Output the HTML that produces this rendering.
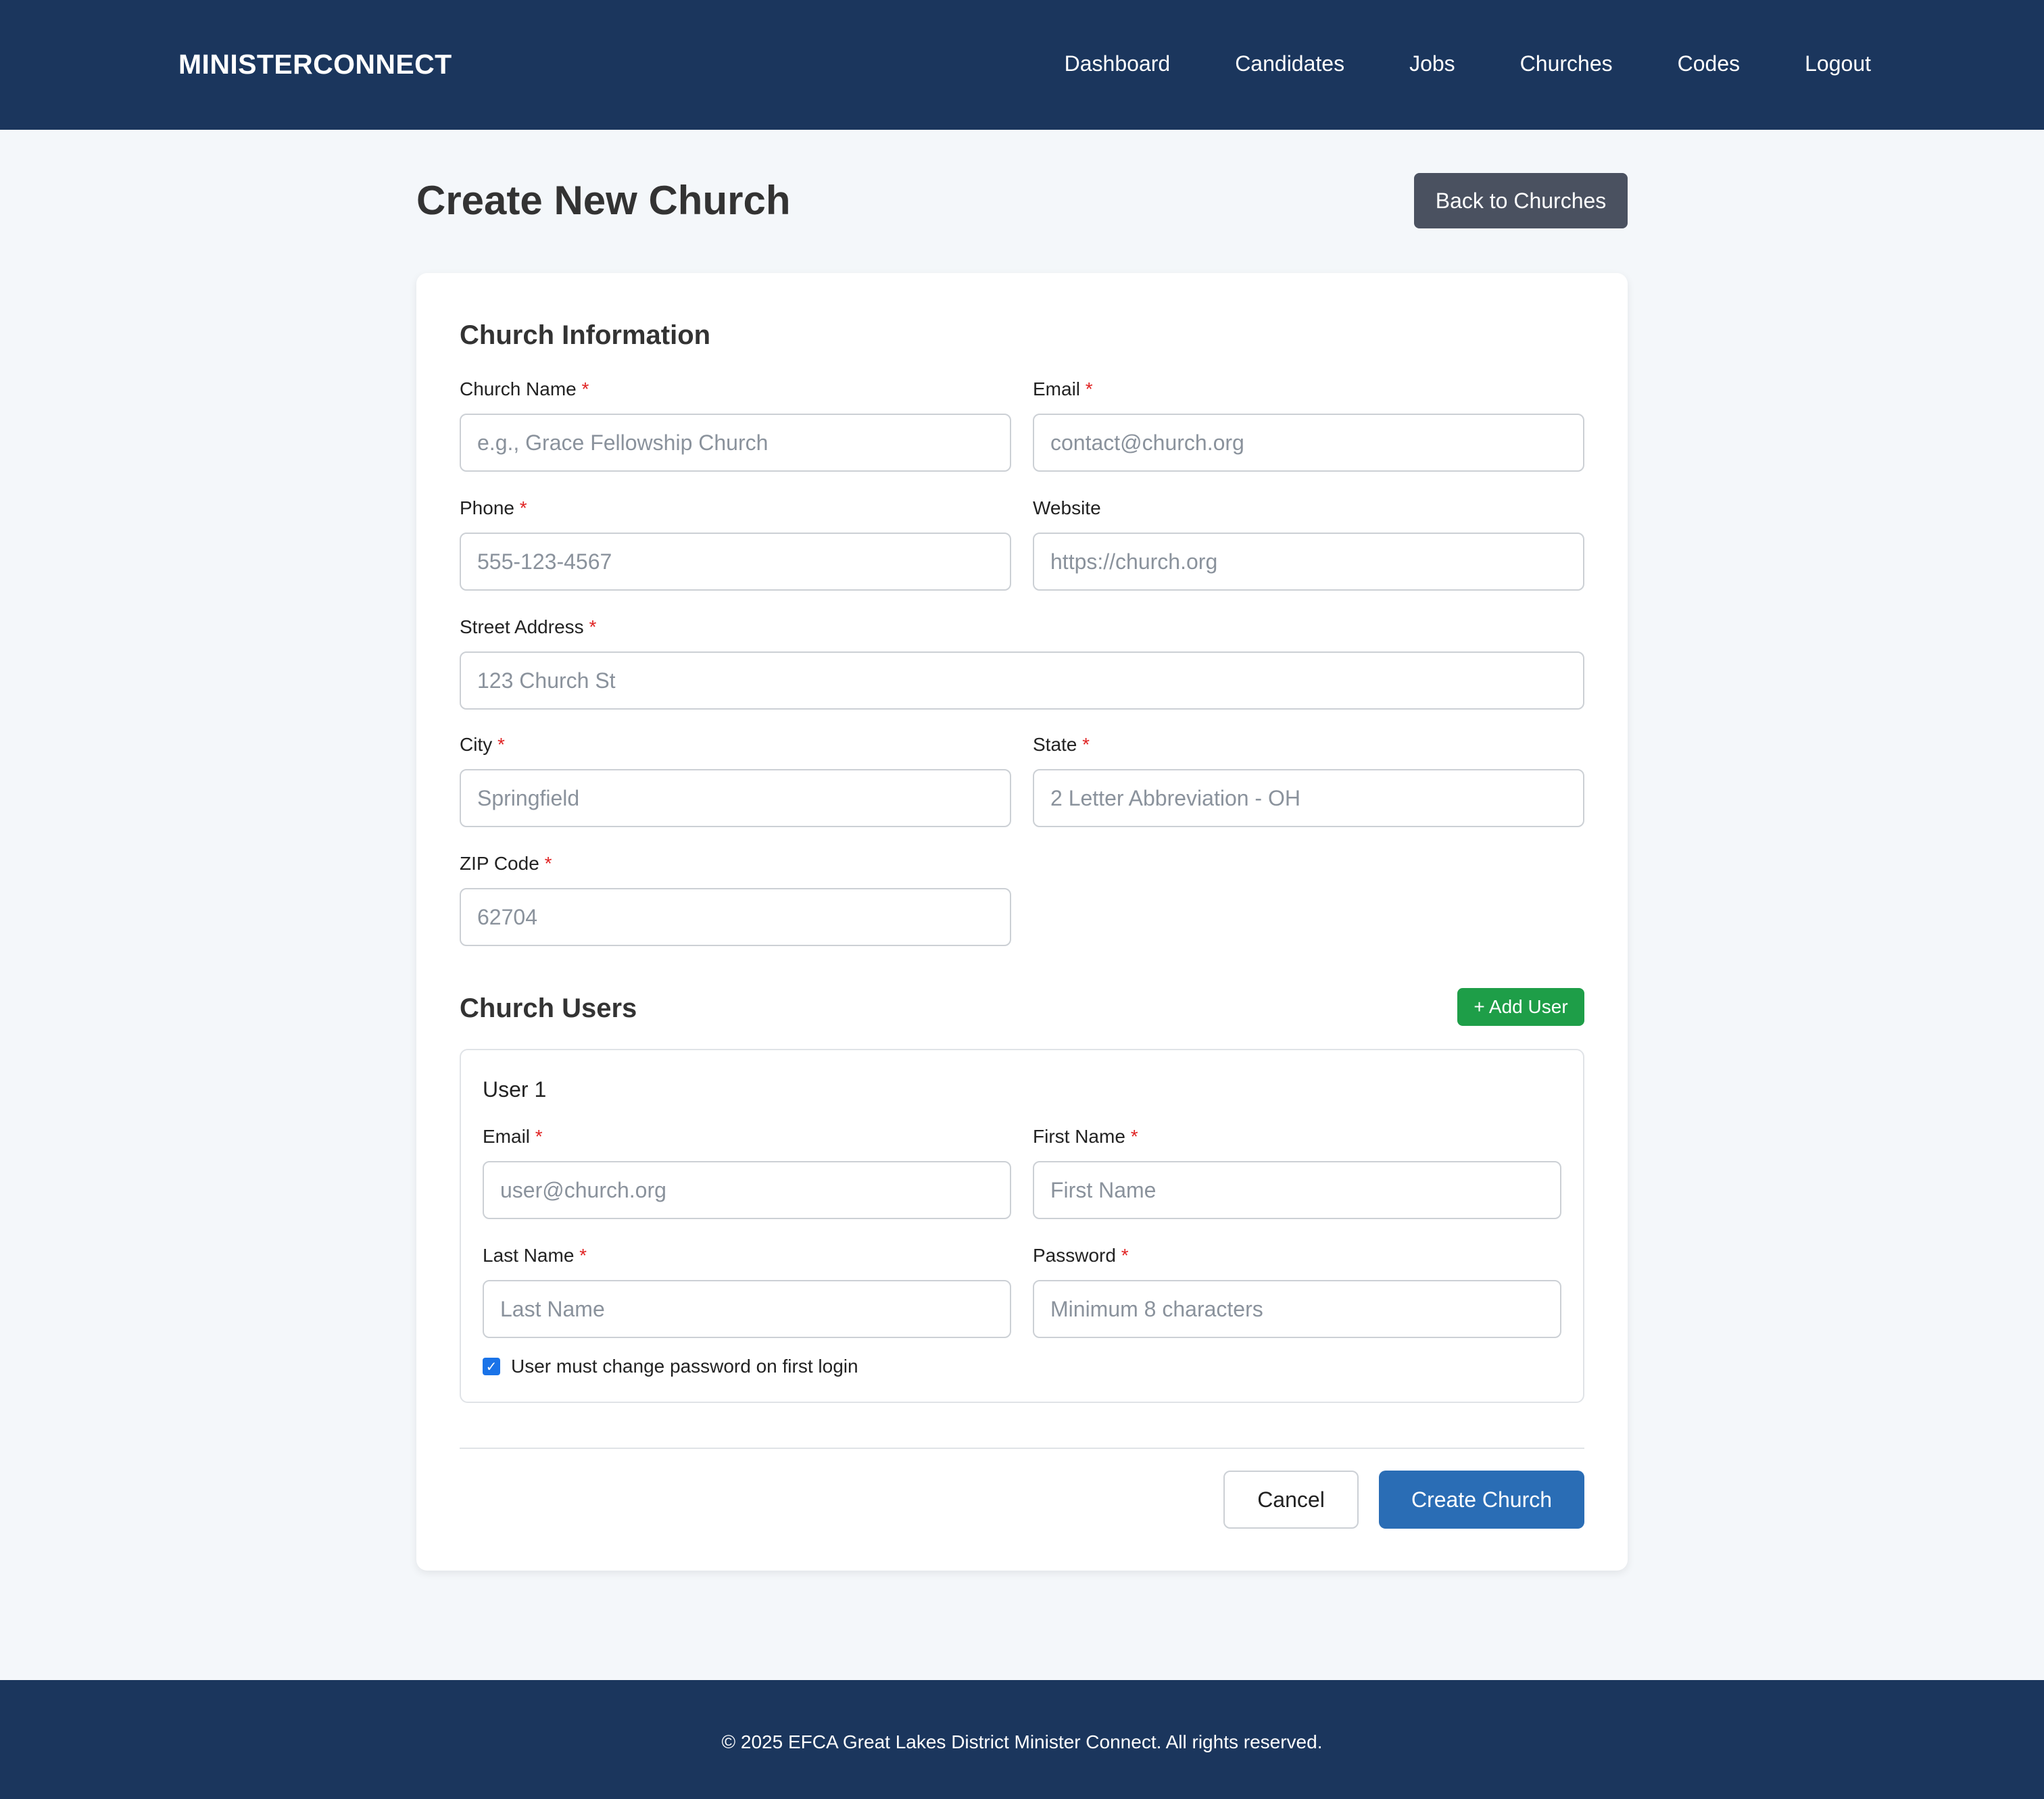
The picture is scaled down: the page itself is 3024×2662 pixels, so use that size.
<!DOCTYPE html>
<html><head><meta charset="utf-8">
<style>
*{box-sizing:border-box;margin:0;padding:0}
html,body{width:3024px;height:2662px;overflow:hidden}
body{background:#f4f7fa;font-family:"Liberation Sans",Arial,sans-serif;color:#333}
#root{zoom:2;width:1512px;height:1331px;position:relative}
header{height:96px;background:#1b365d;position:relative;color:#fff}
.logo{position:absolute;left:132px;top:36px;font-weight:bold;font-size:20.5px;letter-spacing:.2px}
nav{position:absolute;right:128px;top:38px;display:flex;gap:48px;font-size:16px}
.main{position:absolute;left:308px;width:896px;top:96px}
h1{position:absolute;top:35px;font-size:30px;font-weight:bold;color:#333}
.back{position:absolute;right:0;top:32px;height:41px;width:158px;background:#4a5160;color:#fff;border-radius:4px;font-size:16px;display:flex;align-items:center;justify-content:center}
.card{position:absolute;top:106px;left:0;width:896px;height:960px;background:#fff;border-radius:8px;box-shadow:0 2px 6px rgba(0,0,0,.08);padding:0 32px}
h2{position:absolute;font-size:20px;font-weight:bold;color:#333}
.f{position:absolute;width:408px}
.f label{display:block;font-size:14px;color:#222;height:19px}
.f label b{color:#e02424;font-weight:normal}
.f .in{margin-top:7px;height:43px;border:1px solid #ccd0d5;border-radius:5px;padding:0 12px;font-size:16px;color:#8a929c;display:flex;align-items:center}
.add{position:absolute;right:32px;top:529px;width:94px;height:28px;background:#1e9e48;color:#fff;font-size:14px;border-radius:4px;display:flex;align-items:center;justify-content:center}
.ubox{position:absolute;left:32px;top:574px;width:832px;height:262px;border:1px solid #e0e3e7;border-radius:6px}
.hr{position:absolute;left:32px;width:832px;top:869px;border-top:1px solid #e0e3e7}
.btn{position:absolute;top:886px;height:43px;border-radius:5px;font-size:16px;display:flex;align-items:center;justify-content:center}
footer{position:absolute;top:1243px;left:0;width:1512px;height:88px;background:#1b365d;color:#fff;font-size:14px;text-align:center;padding-top:38px}
</style></head><body><div id="root">
<header><div class="logo">MINISTERCONNECT</div>
<nav><span>Dashboard</span><span>Candidates</span><span>Jobs</span><span>Churches</span><span>Codes</span><span>Logout</span></nav></header>
<div class="main">
<h1>Create New Church</h1>
<div class="back">Back to Churches</div>
<div class="card">
<h2 style="left:32px;top:35px">Church Information</h2>
<div class="f" style="left:32px;top:78px"><label>Church Name <b>*</b></label><div class="in">e.g., Grace Fellowship Church</div></div>
<div class="f" style="left:456px;top:78px"><label>Email <b>*</b></label><div class="in">contact@church.org</div></div>
<div class="f" style="left:32px;top:166px"><label>Phone <b>*</b></label><div class="in">555-123-4567</div></div>
<div class="f" style="left:456px;top:166px"><label>Website</label><div class="in">https://church.org</div></div>
<div class="f" style="left:32px;top:254px;width:832px"><label>Street Address <b>*</b></label><div class="in">123 Church St</div></div>
<div class="f" style="left:32px;top:341px"><label>City <b>*</b></label><div class="in">Springfield</div></div>
<div class="f" style="left:456px;top:341px"><label>State <b>*</b></label><div class="in">2 Letter Abbreviation - OH</div></div>
<div class="f" style="left:32px;top:429px"><label>ZIP Code <b>*</b></label><div class="in">62704</div></div>
<h2 style="left:32px;top:533px">Church Users</h2>
<div class="add">+ Add User</div>
<div class="ubox">
<div style="position:absolute;left:16px;top:20px;font-size:16px;color:#222">User 1</div>
<div class="f" style="left:16px;top:56px;width:391px"><label>Email <b>*</b></label><div class="in">user@church.org</div></div>
<div class="f" style="left:423px;top:56px;width:391px"><label>First Name <b>*</b></label><div class="in">First Name</div></div>
<div class="f" style="left:16px;top:144px;width:391px"><label>Last Name <b>*</b></label><div class="in">Last Name</div></div>
<div class="f" style="left:423px;top:144px;width:391px"><label>Password <b>*</b></label><div class="in">Minimum 8 characters</div></div>
<div style="position:absolute;left:16px;top:226px;font-size:14px;color:#222;display:flex;align-items:center;gap:8px"><span style="width:13px;height:13px;background:#1a73e8;border-radius:2px;display:inline-flex;align-items:center;justify-content:center;color:#fff;font-size:10px">✓</span>User must change password on first login</div>
</div>
<div class="hr"></div>
<div class="btn" style="left:597px;width:100px;border:1px solid #ccd0d5;color:#222;background:#fff">Cancel</div>
<div class="btn" style="left:712px;width:152px;background:#2a6db5;color:#fff">Create Church</div>
</div></div>
<footer>© 2025 EFCA Great Lakes District Minister Connect. All rights reserved.</footer>
</div></body></html>
